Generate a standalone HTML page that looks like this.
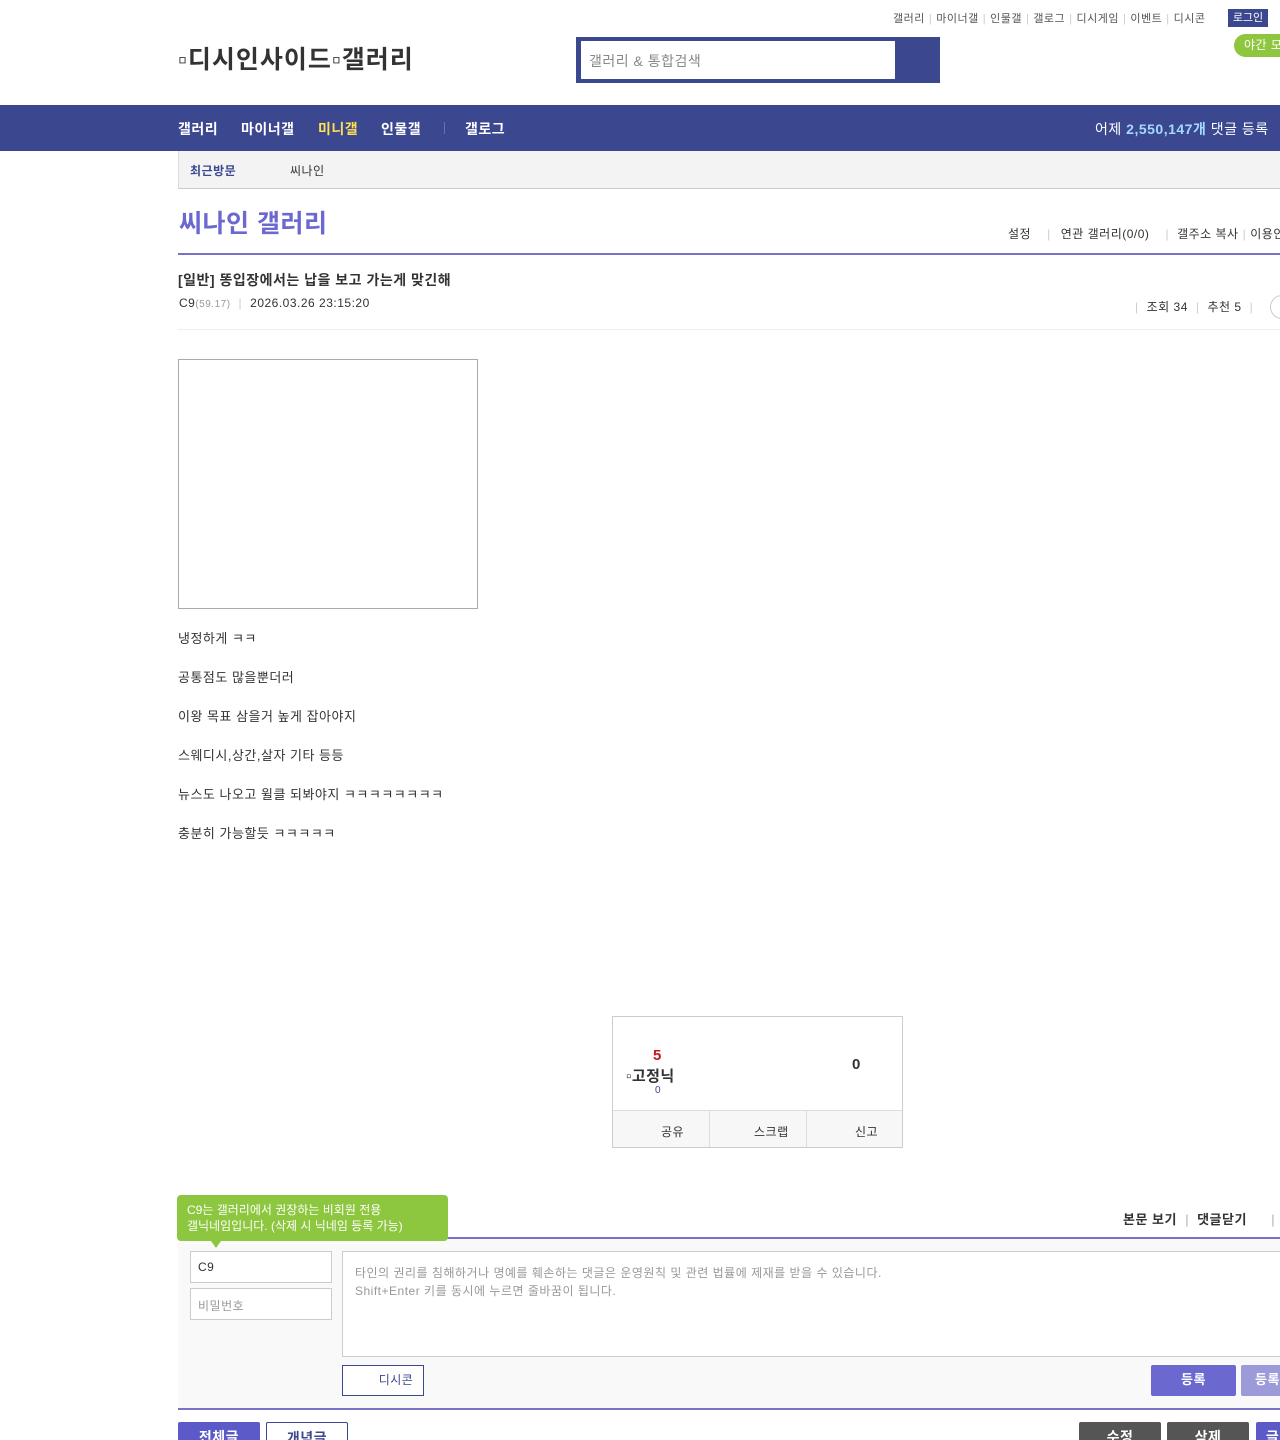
<!DOCTYPE html>
<html><head><meta charset="utf-8"><style>
*{margin:0;padding:0;box-sizing:border-box}
html,body{width:1280px;height:1440px;overflow:hidden;background:#fff}
body{position:relative;font-family:"Liberation Sans","Noto Sans CJK KR",sans-serif;color:#333;letter-spacing:0.5px}
.a{position:absolute;white-space:nowrap}
.topl{font-size:11px;color:#555;top:10px}
.sep{color:#ccc;margin:0 4px}
.nav{top:105px;left:0;width:1280px;height:46px;background:#3b4890}
.nav span{position:absolute;top:14px;font-size:14px;font-weight:bold;color:#fff}
.p{font-size:13px;color:#333}
.btn{position:absolute;height:30px;border-radius:2px;font-size:14px;font-weight:bold;text-align:center;line-height:30px}
</style></head><body>
<div class="a topl" style="left:893px">갤러리<span class="sep">|</span>마이너갤<span class="sep">|</span>인물갤<span class="sep">|</span>갤로그<span class="sep">|</span>디시게임<span class="sep">|</span>이벤트<span class="sep">|</span>디시콘</div>
<div class="a" style="left:1228px;top:9px;width:40px;height:18px;background:#3b4890;color:#fff;font-size:11px;text-align:center;line-height:18px;letter-spacing:0">로그인</div>
<div class="a" style="left:1234px;top:34px;width:60px;height:23px;background:#8ec63f;border-radius:12px;color:#fff;font-size:12px;line-height:23px;padding-left:10px">야간 모드</div>
<div class="a" style="left:178px;top:40px;font-size:25px;font-weight:bold;color:#333;letter-spacing:1px">▫디시인사이드▫갤러리</div>
<div class="a" style="left:576px;top:37px;width:364px;height:46px;background:#3b4890"></div>
<div class="a" style="left:581px;top:41px;width:314px;height:38px;background:#fff;font-size:14px;color:#888;padding:10px 8px">갤러리 &amp; 통합검색</div>
<div class="a nav"><span style="left:178px">갤러리</span><span style="left:241px">마이너갤</span><span style="left:318px;color:#ffe14f">미니갤</span><span style="left:381px">인물갤</span><span style="left:444px;top:17px;width:1px;height:12px;background:#6a74a8"></span><span style="left:465px">갤로그</span><span style="left:1095px;font-weight:normal">어제 <b style="color:#a5d9ff">2,550,147개</b> 댓글 등록</span></div>
<div class="a" style="left:178px;top:151px;width:1110px;height:38px;background:#f3f3f3;border-left:1px solid #ddd;border-bottom:1px solid #ccc"></div>
<div class="a" style="left:190px;top:162px;font-size:12px;font-weight:bold;color:#3b4890">최근방문</div>
<div class="a" style="left:290px;top:162px;font-size:12px;color:#333">씨나인</div>
<div class="a" style="left:179px;top:204px;font-size:25px;font-weight:bold;color:#6b68cf">씨나인 갤러리</div>
<div class="a" style="left:1008px;top:225px;font-size:12px;color:#333">설정<span class="sep" style="margin:0 10px 0 16px">|</span>연관 갤러리(0/0)<span class="sep" style="margin:0 8px 0 16px">|</span>갤주소 복사<span class="sep">|</span>이용안내</div>
<div class="a" style="left:178px;top:253px;width:1110px;height:2px;background:#7873c6"></div>
<div class="a" style="left:178px;top:270px;font-size:14px;font-weight:bold;color:#333">[일반] 똥입장에서는 납을 보고 가는게 맞긴해</div>
<div class="a" style="left:179px;top:296px;font-size:12px;color:#333">C9<span style="font-size:10px;color:#999">(59.17)</span><span class="sep" style="margin:0 8px">|</span>2026.03.26 23:15:20</div>
<div class="a" style="left:1135px;top:298px;font-size:12px;color:#333"><span class="sep" style="margin:0 8px 0 0">|</span>조회 34<span class="sep" style="margin:0 8px">|</span>추천 5<span class="sep" style="margin:0 8px">|</span></div>
<div class="a" style="left:1270px;top:295px;width:24px;height:24px;border:1px solid #ccc;border-radius:12px"></div>
<div class="a" style="left:178px;top:329px;width:1110px;height:1px;background:#eee"></div>
<div class="a" style="left:178px;top:359px;width:300px;height:250px;border:1px solid #aaa"></div>
<div class="a p" style="left:178px;top:628px">냉정하게 ㅋㅋ</div>
<div class="a p" style="left:178px;top:667px">공통점도 많을뿐더러</div>
<div class="a p" style="left:178px;top:706px">이왕 목표 삼을거 높게 잡아야지</div>
<div class="a p" style="left:178px;top:745px">스웨디시,상간,살자 기타 등등</div>
<div class="a p" style="left:178px;top:784px">뉴스도 나오고 윌클 되봐야지 ㅋㅋㅋㅋㅋㅋㅋㅋ</div>
<div class="a p" style="left:178px;top:823px">충분히 가능할듯 ㅋㅋㅋㅋㅋ</div>
<div class="a" style="left:612px;top:1016px;width:291px;height:132px;border:1px solid #ccc"></div>
<div class="a" style="left:613px;top:1110px;width:289px;height:37px;background:#f7f7f7;border-top:1px solid #ddd"></div>
<div class="a" style="left:709px;top:1111px;width:1px;height:36px;background:#ddd"></div>
<div class="a" style="left:806px;top:1111px;width:1px;height:36px;background:#ddd"></div>
<div class="a" style="left:653px;top:1047px;font-size:15px;font-weight:bold;color:#c4161c">5</div>
<div class="a" style="left:626px;top:1065px;font-size:15px;font-weight:bold;color:#333">▫고정닉</div>
<div class="a" style="left:655px;top:1085px;font-size:10px;color:#3b4890">0</div>
<div class="a" style="left:852px;top:1056px;font-size:15px;font-weight:bold;color:#333">0</div>
<div class="a" style="left:661px;top:1123px;font-size:12px">공유</div>
<div class="a" style="left:754px;top:1123px;font-size:12px">스크랩</div>
<div class="a" style="left:855px;top:1123px;font-size:12px">신고</div>
<div class="a" style="left:1123px;top:1209px;font-size:13px;font-weight:bold;color:#333">본문 보기<span class="sep" style="margin:0 8px">|</span>댓글닫기<span class="sep" style="margin:0 8px 0 24px">|</span></div>
<div class="a" style="left:178px;top:1237px;width:1110px;height:173px;background:#f9f9f9;border-top:2px solid #7873c6;border-bottom:2px solid #7873c6"></div>
<div class="a" style="left:177px;top:1195px;width:271px;height:46px;background:#8dc63f;border-radius:4px;color:#fff;font-size:12px;line-height:16px;padding:7px 10px;white-space:normal;letter-spacing:0">C9는 갤러리에서 권장하는 비회원 전용<br>갤닉네임입니다. (삭제 시 닉네임 등록 가능)</div>
<div class="a" style="left:211px;top:1241px;border-left:5px solid transparent;border-right:5px solid transparent;border-top:7px solid #8dc63f"></div>
<div class="a" style="left:190px;top:1251px;width:142px;height:32px;border:1px solid #ccc;background:#fff;font-size:12px;padding:8px 7px">C9</div>
<div class="a" style="left:190px;top:1288px;width:142px;height:32px;border:1px solid #ccc;background:#fff;font-size:12px;color:#999;padding:8px 7px">비밀번호</div>
<div class="a" style="left:342px;top:1251px;width:950px;height:106px;border:1px solid #ccc;background:#fff;font-size:12px;color:#999;line-height:18px;padding:12px 12px">타인의 권리를 침해하거나 명예를 훼손하는 댓글은 운영원칙 및 관련 법률에 제재를 받을 수 있습니다.<br>Shift+Enter 키를 동시에 누르면 줄바꿈이 됩니다.</div>
<div class="a" style="left:342px;top:1365px;width:82px;height:31px;border:1px solid #3b4890;background:#fff;font-size:12px;color:#3b4890;text-align:center;line-height:29px;padding-left:26px">디시콘</div>
<div class="btn" style="left:1151px;top:1365px;width:85px;height:31px;background:#6b68cf;color:#fff;font-size:13px">등록</div>
<div class="btn" style="left:1241px;top:1365px;width:60px;height:31px;background:#9c9ad8;color:#fff;font-size:13px;text-align:left;padding-left:14px">등록</div>
<div class="btn" style="left:178px;top:1422px;width:82px;background:#5c5ac8;color:#fff">전체글</div>
<div class="btn" style="left:266px;top:1422px;width:82px;background:#fff;border:1px solid #3b4890;color:#3b4890">개념글</div>
<div class="btn" style="left:1079px;top:1422px;width:82px;background:#555;color:#fff">수정</div>
<div class="btn" style="left:1167px;top:1422px;width:82px;background:#555;color:#fff">삭제</div>
<div class="btn" style="left:1256px;top:1422px;width:60px;background:#5c5ac8;color:#fff">글쓰기</div>
</body></html>
